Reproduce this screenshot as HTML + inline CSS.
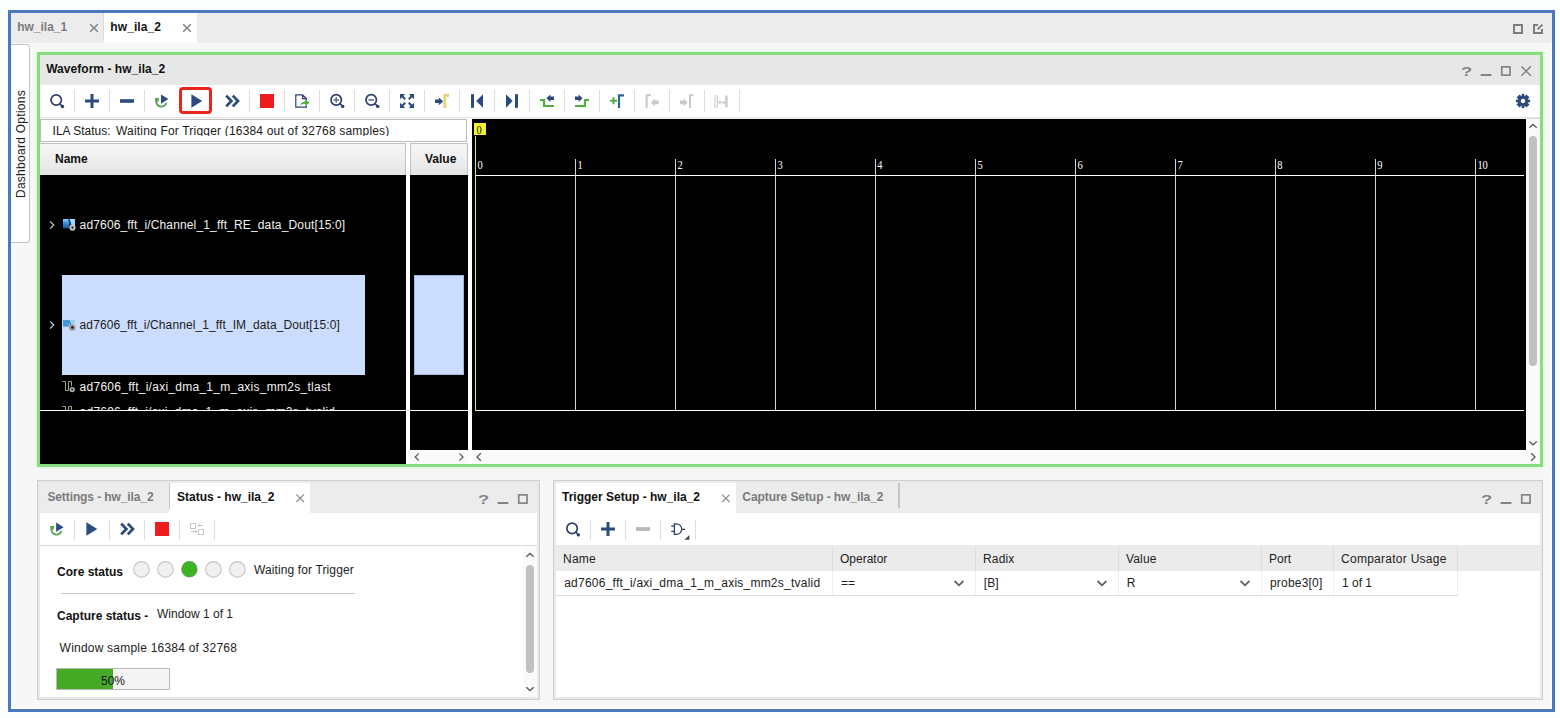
<!DOCTYPE html>
<html>
<head>
<meta charset="utf-8">
<title>hw_ila_2</title>
<style>
*{box-sizing:border-box;margin:0;padding:0}
html,body{width:1560px;height:718px;overflow:hidden;background:#fdfefe}
body{font-family:"Liberation Sans",sans-serif;font-size:12px;color:#111;position:relative}
.abs{position:absolute}
.t{position:absolute;white-space:nowrap;line-height:14px;height:14px}
.b{font-weight:bold}
.g{color:#7b7b7b}
svg{position:absolute;overflow:visible}
.sep{position:absolute;width:1px;background:#d6d6d6}
/* frame */
#frame{left:8px;top:10px;width:1547px;height:702px;border:3px solid #4c79bb;background:#f7f7f7;box-shadow:inset 0 0 2px 1px rgba(255,255,255,0.95)}
#tabstrip{left:11px;top:13px;width:1541px;height:30px;background:#ececec}
#tab2{left:104px;top:13px;width:93px;height:30px;background:#fff}
#dash{left:11px;top:44px;width:19px;height:199px;background:#fff;border:1px solid #c4c4c4;border-left:none;border-radius:0 4px 4px 0}
#dashtxt{left:-48.2px;top:92.4px;width:116px;letter-spacing:0.275px;text-align:center;transform:rotate(-90deg);transform-origin:center center;color:#1a1a1a}
/* waveform panel */
#wave{left:37px;top:52px;width:1506px;height:415px;border:3px solid #86de7e;background:#fff;box-shadow:0 0 3px 1px rgba(215,255,215,0.9)}
#wtitle{left:40px;top:55px;width:1500px;height:30px;background:#e7e7e7}
#wtool{left:40px;top:85px;width:1500px;height:32px;background:#fff}
#wgap{left:40px;top:117px;width:1500px;height:2px;background:linear-gradient(#e6e6e6 50%,#f6f6f6 50%)}
.black{position:absolute;background:#000}
</style>
</head>
<body>
<div id="frame" class="abs"></div>
<div id="tabstrip" class="abs"></div>
<div id="tab2" class="abs"></div>
<div class="t b g" style="left:17.2px;top:20.4px">hw_ila_1</div>
<div class="abs" style="left:103px;top:13px;width:1px;height:26px;background:#dadada"></div>
<div class="t b" style="left:110.3px;top:20.4px;letter-spacing:0.1px">hw_ila_2</div>
<!--TOPICONS-START-->
<svg width="1560" height="718" viewBox="0 0 1560 718" style="left:0;top:0;pointer-events:none">
<g fill="none" stroke="#7e7e7e">
<path d="M90.2 24.2L97.8 31.8M97.8 24.2L90.2 31.8" stroke-width="1.4"/>
<path d="M183.2 24.2L190.8 31.8M190.8 24.2L183.2 31.8" stroke-width="1.4"/>
<rect x="1514" y="25" width="8" height="8" stroke-width="2"/>
<path d="M1538 25H1534V33H1542V29" stroke-width="2"/>
<path d="M1537.6 29.4L1542.4 24.6" stroke-width="2"/>
</g>
</svg>
<!--TOPICONS-END-->
<div id="dash" class="abs"><div id="dashtxt" class="t">Dashboard Options</div></div>

<div id="wave" class="abs"></div>
<div id="wtitle" class="abs"></div>
<div class="t b" style="left:46.2px;top:61.5px;letter-spacing:0.04px">Waveform - hw_ila_2</div>
<div id="wtool" class="abs"></div>
<div id="wgap" class="abs"></div>
<!--WTOOLBAR-START-->
<!-- waveform toolbar icons (page coordinates) -->
<svg id="wticons" width="1560" height="718" viewBox="0 0 1560 718" style="left:0;top:0;pointer-events:none">
<g fill="none" stroke="none">
<!-- separators -->
<g stroke="#dddddd" stroke-width="1">
<path d="M74.5 90V112M109.5 90V112M144.5 90V112M249.5 90V112M284.5 90V112M319.5 90V112M354.5 90V112M389.5 90V112M424.5 90V112M459.5 90V112M494.5 90V112M529.5 90V112M564.5 90V112M599.5 90V112M634.5 90V112M669.5 90V112M704.5 90V112M739.5 90V112"/>
</g>
<!-- search -->
<circle cx="56.2" cy="100" r="5.2" stroke="#2f3f6c" stroke-width="1.7"/>
<path d="M59.9 103.8L62.6 106.6" stroke="#2f3f6c" stroke-width="1.7"/>
<circle cx="62.5" cy="106.5" r="1.7" fill="#2f3f6c"/>
<!-- plus -->
<path d="M85 101H99M92 94V108" stroke="#2b4b7e" stroke-width="3"/>
<!-- minus -->
<path d="M120 101H134" stroke="#2b4b7e" stroke-width="3.6"/>
<!-- refresh + play -->
<path d="M156.4 100.6A4.9 4.9 0 1 0 166.3 102.6" stroke="#5aa650" stroke-width="1.9"/>
<path d="M154.8 98.1H159.2L158.2 101.8L155.4 101.4Z" fill="#5aa650"/>
<path d="M161 94.4L168.4 99L161 103.8Z" fill="#2b4b7e"/>
<!-- red highlight box -->
<rect x="180.5" y="88.5" width="30" height="24" rx="2.5" stroke="#e8261c" stroke-width="3"/>
<!-- play -->
<path d="M191.4 94.3L202.2 101L191.4 107.7Z" fill="#2b4b7e"/>
<!-- fast forward chevrons -->
<path d="M226.2 95.6L231.4 101L226.2 106.4M232.8 95.6L238 101L232.8 106.4" stroke="#2b4b7e" stroke-width="2.8" stroke-linejoin="miter"/>
<!-- stop -->
<rect x="260" y="94" width="14" height="14" fill="#ee1c1c"/>
<!-- export -->
<path d="M306.4 100.2V98.6L302.6 94.8H295.8V107.2H306.4V105.8M302.6 94.8V98.6H306.4" stroke="#2f3f6c" stroke-width="1.2"/>
<path d="M300.2 105.8C301 103 303 101.6 305.2 101.6V99.4L309.4 102.7L305.2 106V103.8C303.2 103.8 301.6 104.4 300.2 105.8Z" fill="#4caf3c"/>
<!-- zoom in -->
<circle cx="336.2" cy="99.9" r="5.2" stroke="#2f3f6c" stroke-width="1.7"/>
<path d="M339.9 103.7L342.8 106.5" stroke="#2f3f6c" stroke-width="1.7"/>
<circle cx="342.7" cy="106.4" r="1.7" fill="#2f3f6c"/>
<path d="M333.4 99.9H339M336.2 97.1V102.7" stroke="#5a6f98" stroke-width="1.5"/>
<!-- zoom out -->
<circle cx="371.2" cy="99.9" r="5.2" stroke="#2f3f6c" stroke-width="1.7"/>
<path d="M374.9 103.7L377.8 106.5" stroke="#2f3f6c" stroke-width="1.7"/>
<circle cx="377.7" cy="106.4" r="1.7" fill="#2f3f6c"/>
<path d="M368.4 99.9H374" stroke="#5a6f98" stroke-width="1.6"/>
<!-- fit -->
<g fill="#2b4b7e" stroke="#2b4b7e">
<path d="M400 94H405.2L400 99.2Z M414 94H408.8L414 99.2Z M400 108H405.2L400 102.8Z M414 108H408.8L414 102.8Z" stroke="none"/>
<path d="M401.6 95.6L405.2 99.2M412.4 95.6L408.8 99.2M401.6 106.4L405.2 102.8M412.4 106.4L408.8 102.8" stroke-width="2.1" fill="none"/>
</g>
<!-- goto cursor -->
<path d="M444.8 108V95.4H449" stroke="#e6d26e" stroke-width="2.6"/>
<path d="M435 99.6H438.8V97.4L443.2 101.3L438.8 105.2V103H435Z" fill="#2b4b7e"/>
<!-- first -->
<rect x="471" y="94.2" width="3" height="13.6" fill="#2b4b7e"/>
<path d="M483 94.2V107.8L476.2 101Z" fill="#2b4b7e"/>
<!-- last -->
<rect x="515" y="94.2" width="3" height="13.6" fill="#2b4b7e"/>
<path d="M506 94.2V107.8L512.6 101Z" fill="#2b4b7e"/>
<!-- prev transition -->
<path d="M540 100H544V106H554" stroke="#4caf3c" stroke-width="2.2"/>
<path d="M554 96.4H550.4V94.4L546.4 98.2L550.4 102V100H554Z" fill="#2b4b7e"/>
<!-- next transition -->
<path d="M589 100H585V106H575" stroke="#4caf3c" stroke-width="2.2"/>
<path d="M575 96.4H578.6V94.4L582.6 98.2L578.6 102V100H575Z" fill="#2b4b7e"/>
<!-- add marker -->
<path d="M610 100.8H617M613.5 97.3V104.3" stroke="#4caf3c" stroke-width="2"/>
<path d="M619 108V95.3H624" stroke="#2a659c" stroke-width="2.2"/>
<!-- disabled: prev marker -->
<path d="M646.6 108V95.3H651" stroke="#c9c9c9" stroke-width="2"/>
<path d="M658.6 100.6H655V98.6L650.8 102.4L655 106.2V104.2H658.6Z" fill="#c9c9c9"/>
<!-- disabled: next marker -->
<path d="M690 108V95.3H693.6" stroke="#c9c9c9" stroke-width="2"/>
<path d="M680 100.6H683.6V98.6L687.8 102.4L683.6 106.2V104.2H680Z" fill="#c9c9c9"/>
<!-- disabled: swap -->
<rect x="715" y="95.5" width="2.4" height="12" rx="1" stroke="#c9c9c9" stroke-width="1"/>
<path d="M726.4 95.5V107.5" stroke="#c9c9c9" stroke-width="2.4"/>
<path d="M718.6 102.4H725" stroke="#c9c9c9" stroke-width="1"/>
<path d="M720.8 100.8L718.6 102.4L720.8 104M723 100.8L725.2 102.4L723 104" stroke="#c9c9c9" stroke-width="1"/>
<!-- gear -->
<g transform="translate(1523 101)">
<g fill="#2c4a7c">
<circle r="5.1"/>
<rect x="-1.35" y="-7.1" width="2.7" height="14.2"/>
<rect x="-1.35" y="-7.1" width="2.7" height="14.2" transform="rotate(90)"/>
<rect x="-2.1" y="-7" width="4.2" height="14" transform="rotate(45)"/>
<rect x="-2.1" y="-7" width="4.2" height="14" transform="rotate(135)"/>
</g>
<circle r="2.2" fill="#fff"/>
</g>
<!-- waveform title icons -->
<g>
<g stroke="#848484" fill="none">
<path d="M1480.6 75H1491.4" stroke-width="2"/>
<rect x="1501.75" y="66.85" width="8.3" height="8.3" stroke-width="1.7"/>
</g>
<text x="0" y="0" transform="translate(1461.1 75.8) scale(1.36 1)" font-family="Liberation Sans, sans-serif" font-weight="bold" font-size="13.5" fill="#848484" stroke="none">?</text>
</g>
<path d="M1521.4 66.4L1530.8 75.8M1530.8 66.4L1521.4 75.8" stroke="#848484" stroke-width="1.5" fill="none"/>
</g>
</svg>
<!--WTOOLBAR-END-->
<!--WBODY-START-->
<!-- ILA status box -->
<div class="abs" style="left:40px;top:119px;width:427px;height:23px;background:#fff;border:1px solid #bcbcbc"></div>
<div class="abs" style="left:41px;top:120px;width:420px;height:16px;overflow:hidden"><div class="t" style="left:11.6px;top:4px;color:#1a1a1a">ILA Status:</div><div class="t" style="left:75px;top:4px;color:#1a1a1a;letter-spacing:0.19px">Waiting For Trigger (16384 out of 32768 samples)</div></div>
<!-- column headers -->
<div class="abs" style="left:40px;top:143px;width:366px;height:32px;background:linear-gradient(#f6f6f6,#efefef 45%,#e3e3e3);border-top:1px solid #c2c2c2;border-right:1px solid #c2c2c2"></div>
<div class="t b" style="left:55px;top:152px">Name</div>
<div class="abs" style="left:410px;top:143px;width:58px;height:32px;background:linear-gradient(#f6f6f6,#efefef 45%,#e3e3e3);border-top:1px solid #c2c2c2;border-right:1px solid #c2c2c2;border-left:1px solid #c2c2c2"></div>
<div class="t b" style="left:425px;top:152px">Value</div>
<!-- black areas -->
<div class="black" style="left:40px;top:175px;width:366px;height:289px"></div>
<div class="black" style="left:410px;top:175px;width:58px;height:275px"></div>
<div class="black" style="left:472px;top:119px;width:1054px;height:331px"></div>
<!-- scrollbars -->
<div class="abs" style="left:410px;top:450px;width:58px;height:14px;background:#fafafa"></div>
<div class="abs" style="left:472px;top:450px;width:1068px;height:14px;background:#fafafa"></div>
<div class="abs" style="left:1526px;top:119px;width:14px;height:331px;background:#fafafa"></div>
<div class="abs" style="left:1527px;top:118px;width:13px;height:1px;background:#d8d8d8"></div>
<div class="abs" style="left:1529px;top:136px;width:8px;height:230px;background:#c1c1c1;border-radius:4px"></div>
<!-- name column rows -->
<div class="abs" style="left:40px;top:175px;width:366px;height:235px;overflow:hidden">
  <div class="abs" style="left:22px;top:100px;width:303px;height:100px;background:#ccdcfc"></div>
  <div class="t" style="left:39.6px;top:43px;color:#f2f2f2;letter-spacing:0.148px">ad7606_fft_i/Channel_1_fft_RE_data_Dout[15:0]</div>
  <div class="t" style="left:39.6px;top:143px;color:#1c1c1c;letter-spacing:0.1px">ad7606_fft_i/Channel_1_fft_IM_data_Dout[15:0]</div>
  <div class="t" style="left:39.6px;top:204.6px;color:#f2f2f2;letter-spacing:0.264px">ad7606_fft_i/axi_dma_1_m_axis_mm2s_tlast</div>
  <div class="t" style="left:39.6px;top:229.6px;color:#f2f2f2;letter-spacing:0.22px">ad7606_fft_i/axi_dma_1_m_axis_mm2s_tvalid</div>
</div>
<div class="abs" style="left:414px;top:275px;width:50px;height:100px;background:#ccdcfc;border:1px solid #9db9ee"></div>
<!-- lines -->
<div class="abs" style="left:40px;top:410px;width:366px;height:1px;background:#fff"></div>
<div class="abs" style="left:410px;top:410px;width:58px;height:1px;background:#fff"></div>
<svg id="wavesvg" width="1560" height="718" viewBox="0 0 1560 718" style="left:0;top:0;pointer-events:none">
<g fill="none">
<path d="M575.5 159V410M675.5 159V410M775.5 159V410M875.5 159V410M975.5 159V410M1075.5 159V410M1175.5 159V410M1275.5 159V410M1375.5 159V410M1475.5 159V410" stroke="#d4d4d4" stroke-width="1"/>
<path d="M475 175.5H1524M475 410.5H1524" stroke="#fff" stroke-width="1"/>
<path d="M475.5 136V411" stroke="#e2e25a" stroke-width="1"/>
<rect x="474" y="123" width="12" height="12" fill="#f2f232"/>
<g font-family="Liberation Serif, serif" font-size="12.2" fill="#ffffff" transform="scale(0.86 1)"><text x="555.1" y="169.2">0</text><text x="671.4" y="169.2">1</text><text x="787.7" y="169.2">2</text><text x="904.0" y="169.2">3</text><text x="1020.2" y="169.2">4</text><text x="1136.5" y="169.2">5</text><text x="1252.8" y="169.2">6</text><text x="1369.1" y="169.2">7</text><text x="1485.3" y="169.2">8</text><text x="1601.6" y="169.2">9</text><text x="1717.9" y="169.2">10</text></g>
<text x="554.1" y="134.2" font-family="Liberation Serif, serif" font-size="12.2" fill="#111" transform="scale(0.86 1)">0</text>
<!-- scrollbar arrows -->
<g stroke="#5a5a5a" stroke-width="1.3">
<path d="M1529.3 127.8L1533 124.4L1536.7 127.8"/>
<path d="M1529.3 441.4L1533 444.8L1536.7 441.4"/>
<path d="M1531.2 453.2L1535 457L1531.2 460.8"/>
<path d="M480.8 453.2L477 457L480.8 460.8"/>
<path d="M418.8 453.4L415.2 457L418.8 460.6"/>
<path d="M459.4 453.4L463 457L459.4 460.6"/>
</g>
<!-- tree chevrons -->
<g stroke="#cdcdcd" stroke-width="1.25">
<path d="M50.2 221.4L53.7 225L50.2 228.6"/>
<path d="M50.2 321.4L53.7 325L50.2 328.6"/>
</g>
<!-- signal icons -->
<defs>
<linearGradient id="bl1" x1="0" y1="0" x2="0" y2="1"><stop offset="0" stop-color="#8fd0ff"/><stop offset="0.45" stop-color="#3b8fe0"/><stop offset="1" stop-color="#1d4f9a"/></linearGradient>
</defs>
<g>
<rect x="63" y="219" width="6.4" height="9.4" fill="url(#bl1)"/>
<path d="M69.4 219H75V226H71.6Z" fill="#9fd6ff"/>
<path d="M68.6 219L71.4 226.4" stroke="#1a3f7c" stroke-width="1.4"/>
<circle cx="72.5" cy="227.6" r="3.1" fill="#c4c4c4"/><circle cx="72.5" cy="227.6" r="1.1" fill="#111"/>
</g>
<g>
<rect x="63" y="320" width="6.2" height="6.6" fill="#3f9bd9"/>
<path d="M69.2 320H75V322L72 326H69.2Z" fill="#9fcdee"/>
<path d="M68.8 320.4L71.2 325.6" stroke="#3579b8" stroke-width="1.2"/>
<circle cx="72.2" cy="327.5" r="3.3" fill="#9b9b9b"/><circle cx="72.4" cy="327.5" r="1.2" fill="#111"/>
</g>
<g>
<path d="M62.5 381.5H65.5V390.5H68.5V381.5H71.5V386" stroke="#93ad8a" stroke-width="1"/>
<circle cx="72.2" cy="389.6" r="2.7" fill="#a9a9a9"/><circle cx="72.2" cy="389.6" r="1" fill="#222"/>
</g>
<g>
<path d="M62.5 406.5H65.5V410M68.5 410V406.5H71.5V410" stroke="#93ad8a" stroke-width="1"/>
</g>
</g>
</svg>
<!--WBODY-END-->
<!--BOTTOMLEFT-START-->
<!-- bottom-left panel -->
<div class="abs" style="left:37px;top:480px;width:503px;height:220px;border:1px solid #cfcfcf;box-shadow:inset 0 0 0 2px #e9e9e9;background:#fff"></div>
<div class="abs" style="left:40px;top:483px;width:497px;height:30px;background:#ececec"></div>
<div class="abs" style="left:169px;top:483px;width:141px;height:30px;background:#fff"></div>
<div class="abs" style="left:169px;top:483px;width:1px;height:26px;background:#c6c6c6"></div>
<div class="t b g" style="left:47.4px;top:490px;letter-spacing:-0.1px">Settings - hw_ila_2</div>
<div class="t b" style="left:177px;top:490px">Status - hw_ila_2</div>
<div class="abs" style="left:40px;top:545px;width:497px;height:1px;background:#d9d9d9"></div>
<div class="abs" style="left:523px;top:546px;width:14px;height:151px;background:#fafafa"></div>
<div class="abs" style="left:526px;top:565px;width:8px;height:108px;background:#c1c1c1;border-radius:4px"></div>
<div class="t b" style="left:57px;top:565px">Core status</div>
<div class="t" style="left:254px;top:563px;color:#222;letter-spacing:0.12px">Waiting for Trigger</div>
<div class="abs" style="left:61px;top:593px;width:294px;height:1px;background:#c8c8c8"></div>
<div class="t b" style="left:57px;top:609px">Capture status -</div>
<div class="t" style="left:157px;top:607px;color:#222">Window 1 of 1</div>
<div class="t" style="left:59.6px;top:641px;color:#222;letter-spacing:0.215px">Window sample 16384 of 32768</div>
<div class="abs" style="left:56px;top:668px;width:114px;height:22px;border:1px solid #b9b9b9;background:#f5f5f5"></div>
<div class="abs" style="left:57px;top:669px;width:56px;height:20px;background:#45ab27"></div>
<div class="t" style="left:56px;top:674px;width:114px;text-align:center;color:#111">50%</div>
<svg width="1560" height="718" viewBox="0 0 1560 718" style="left:0;top:0;pointer-events:none">
<g fill="none">
<g stroke="#dddddd"><path d="M74.5 520V540M109.5 520V540M144.5 520V540M179.5 520V540M214.5 520V540"/></g>
<g transform="translate(-983 428)">
<g stroke="#848484" fill="none">
<path d="M1480.6 75H1491.4" stroke-width="2"/>
<rect x="1501.75" y="66.85" width="8.3" height="8.3" stroke-width="1.7"/>
</g>
<text x="0" y="0" transform="translate(1461.1 75.8) scale(1.36 1)" font-family="Liberation Sans, sans-serif" font-weight="bold" font-size="13.5" fill="#848484" stroke="none">?</text>
</g>
<!-- refresh+play -->
<path d="M51.6 528.6A4.9 4.9 0 1 0 61.5 530.6" stroke="#5aa650" stroke-width="1.9"/>
<path d="M50 526.1H54.4L53.4 529.8L50.6 529.4Z" fill="#5aa650"/>
<path d="M56.1 522.4L63.6 527.2L56.1 531.8Z" fill="#2b4b7e"/>
<!-- play -->
<path d="M86.4 522.3L97.2 529L86.4 535.7Z" fill="#2b4b7e"/>
<!-- ff -->
<path d="M121.2 523.6L126.4 529L121.2 534.4M127.8 523.6L133 529L127.8 534.4" stroke="#2b4b7e" stroke-width="2.8"/>
<!-- stop -->
<rect x="155" y="522" width="14" height="14" fill="#ee1c1c"/>
<!-- disabled icon -->
<g stroke="#c6c6c6" stroke-width="1">
<rect x="190.5" y="523.5" width="5" height="5"/>
<rect x="198.5" y="529.5" width="5" height="5"/>
<path d="M191 531.5H196M198 525.5H203" />
</g>
<path d="M195.4 529.6L197.6 531.5L195.4 533.4ZM198.4 523.6L200.6 525.5L198.4 527.4Z" fill="#c6c6c6"/>
<!-- status circles -->
<g stroke="#c6c6c6" stroke-width="1.2" fill="#f0f0f0">
<circle cx="141.5" cy="569.4" r="7.8"/><circle cx="165.5" cy="569.4" r="7.8"/><circle cx="213.4" cy="569.4" r="7.8"/><circle cx="237.4" cy="569.4" r="7.8"/>
</g>
<circle cx="189.4" cy="569.3" r="7.6" fill="#3db422" stroke="#55a343" stroke-width="1.2"/>
<!-- header icons -->
<g stroke="#868686">
<path d="M296.4 494.4L304 502M304 494.4L296.4 502" stroke-width="1.3" stroke="#909090"/>
</g>
<g stroke="#5a5a5a" stroke-width="1.3">
<path d="M526.3 556.8L530 553.4L533.7 556.8"/>
<path d="M526.3 687.2L530 690.6L533.7 687.2"/>
</g>
</g>
</svg>
<!--BOTTOMLEFT-END-->
<!--BOTTOMRIGHT-START-->
<!-- bottom-right panel -->
<div class="abs" style="left:553px;top:480px;width:990px;height:220px;border:1px solid #cfcfcf;box-shadow:inset 0 0 0 2px #e9e9e9;background:#fff"></div>
<div class="abs" style="left:556px;top:483px;width:984px;height:30px;background:#ececec"></div>
<div class="abs" style="left:556px;top:483px;width:180px;height:30px;background:#fff"></div>
<div class="abs" style="left:898px;top:483px;width:2px;height:25px;background:#c6c6c6"></div>
<div class="t b" style="left:562px;top:490px">Trigger Setup - hw_ila_2</div>
<div class="t b g" style="left:742.3px;top:490px;letter-spacing:-0.07px">Capture Setup - hw_ila_2</div>
<div class="abs" style="left:556px;top:545px;width:984px;height:26px;background:#ebebeb"></div>
<div class="abs" style="left:556px;top:595px;width:902px;height:1px;background:#e0e0e0"></div>
<div class="sep" style="left:832px;top:546px;height:49px;background:rgba(0,0,0,0.06)"></div>
<div class="sep" style="left:975px;top:546px;height:49px;background:rgba(0,0,0,0.06)"></div>
<div class="sep" style="left:1118px;top:546px;height:49px;background:rgba(0,0,0,0.06)"></div>
<div class="sep" style="left:1261px;top:546px;height:49px;background:rgba(0,0,0,0.06)"></div>
<div class="sep" style="left:1333px;top:546px;height:49px;background:rgba(0,0,0,0.06)"></div>
<div class="sep" style="left:1457px;top:546px;height:49px;background:rgba(0,0,0,0.06)"></div>
<div class="t" style="left:563px;top:552px;color:#222;letter-spacing:0.25px">Name</div>
<div class="t" style="left:840px;top:552px;color:#222">Operator</div>
<div class="t" style="left:983px;top:552px;color:#222;letter-spacing:0.16px">Radix</div>
<div class="t" style="left:1126px;top:552px;color:#222;letter-spacing:0.16px">Value</div>
<div class="t" style="left:1269px;top:552px;color:#222">Port</div>
<div class="t" style="left:1341px;top:552px;color:#222;letter-spacing:0.27px">Comparator Usage</div>
<div class="t" style="left:564.2px;top:576px;color:#222;letter-spacing:0.233px">ad7606_fft_i/axi_dma_1_m_axis_mm2s_tvalid</div>
<div class="t" style="left:841px;top:576px;color:#222">==</div>
<div class="t" style="left:983.8px;top:576px;color:#222">[B]</div>
<div class="t" style="left:1126.8px;top:576px;color:#222">R</div>
<div class="t" style="left:1270px;top:576px;color:#222;letter-spacing:0.2px">probe3[0]</div>
<div class="t" style="left:1342px;top:576px;color:#222">1 of 1</div>
<svg width="1560" height="718" viewBox="0 0 1560 718" style="left:0;top:0;pointer-events:none">
<g fill="none">
<g stroke="#dddddd"><path d="M590.5 520V540M625.5 520V540M660.5 520V540M695.5 520V540"/></g>
<g transform="translate(20 428)">
<g stroke="#848484" fill="none">
<path d="M1480.6 75H1491.4" stroke-width="2"/>
<rect x="1501.75" y="66.85" width="8.3" height="8.3" stroke-width="1.7"/>
</g>
<text x="0" y="0" transform="translate(1461.1 75.8) scale(1.36 1)" font-family="Liberation Sans, sans-serif" font-weight="bold" font-size="13.5" fill="#848484" stroke="none">?</text>
</g>
<!-- search -->
<circle cx="572.1" cy="528.4" r="5.2" stroke="#2f3f6c" stroke-width="1.7"/>
<path d="M575.8 532.2L578.5 535" stroke="#2f3f6c" stroke-width="1.7"/>
<circle cx="578.4" cy="534.9" r="1.7" fill="#2f3f6c"/>
<!-- plus -->
<path d="M601 529H615M608 522V536" stroke="#2b4b7e" stroke-width="3"/>
<!-- minus disabled -->
<path d="M636 529H650" stroke="#b9b9b9" stroke-width="3.8"/>
<!-- gate -->
<g stroke="#2f3f6c" stroke-width="1.3">
<path d="M674.4 523.8H676.4A5.3 5.3 0 0 1 676.4 534.4H674.4Z"/>
<path d="M671.2 526.2H674.4M671.2 531.4H674.4M681.7 529.3H685"/>
</g>
<path d="M689.4 535V539.8H684.4Z" fill="#444"/>
<!-- dropdown chevrons -->
<g stroke="#606060" stroke-width="1.8">
<path d="M954.6 581L959 585.3L963.4 581"/>
<path d="M1097.6 581L1102 585.3L1106.4 581"/>
<path d="M1240.6 581L1245 585.3L1249.4 581"/>
</g>
<!-- header icons -->
<g stroke="#868686">
<path d="M722.2 494.6L729.6 502M729.6 494.6L722.2 502" stroke-width="1.3" stroke="#909090"/>
</g>
</g>
</svg>
<!--BOTTOMRIGHT-END-->
</body>
</html>
